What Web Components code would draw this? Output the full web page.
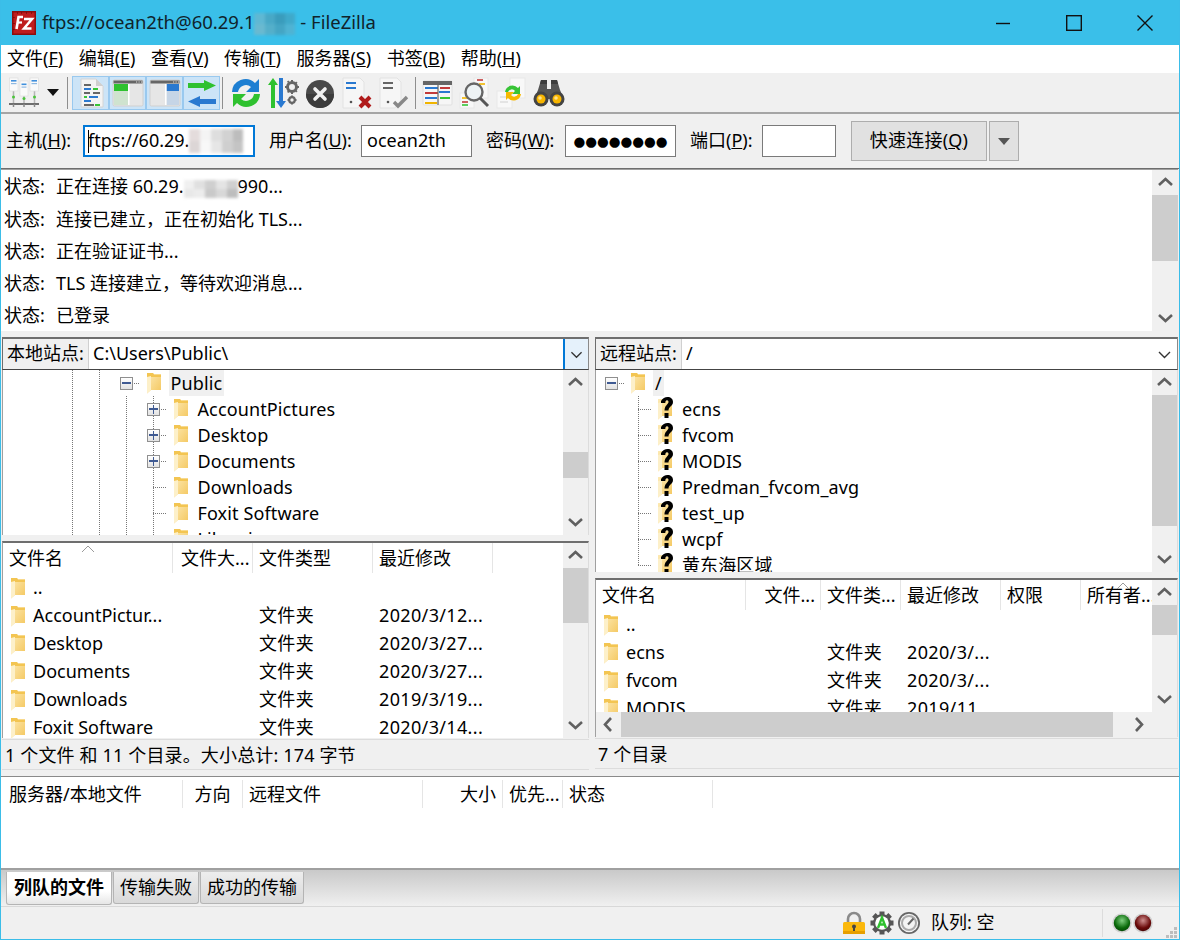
<!DOCTYPE html>
<html lang="zh"><head><meta charset="utf-8"><title>FileZilla</title>
<style>
html,body{margin:0;padding:0;background:#f0f0f0}
body{font:18px/1.2 "Noto Sans","Noto Sans CJK SC",sans-serif;color:#000}
</style></head><body>
<fz-window>
  <fz-titlebar>ftps://ocean2th@60.29.1<fz-blur w="41" h="22" palette="#5fb8d3,#6ab9d0,#48a8c6,#54afca,#3a9cbc,#44a5c4,#3fa9ca,#4fb3d3"></fz-blur> - FileZilla</fz-titlebar>
  <fz-menubar>
    <fz-menu key="F">文件</fz-menu><fz-menu key="E">编辑</fz-menu><fz-menu key="V">查看</fz-menu><fz-menu key="T">传输</fz-menu><fz-menu key="S">服务器</fz-menu><fz-menu key="B">书签</fz-menu><fz-menu key="H">帮助</fz-menu>
  </fz-menubar>
  <fz-toolbar></fz-toolbar>
  <fz-quickconnect></fz-quickconnect>
  <fz-log>
    <fz-logline>正在连接 60.29.<fz-blur w="54" h="18" palette="#f0f0f0,#e8e8e8,#e0e0e0,#ececec,#cfcfcf,#c9c9c9,#e4e4e4,#d8d8d8,#d0d0d0,#bdbdbd"></fz-blur>990...</fz-logline>
    <fz-logline>连接已建立，正在初始化 TLS...</fz-logline>
    <fz-logline>正在验证证书...</fz-logline>
    <fz-logline>TLS 连接建立，等待欢迎消息...</fz-logline>
    <fz-logline>已登录</fz-logline>
  </fz-log>
  <fz-panes>
    <fz-pane>
      <fz-sitebar label="本地站点:" path="C:\Users\Public\" hot></fz-sitebar>
      <fz-tree h="165" sb-before="57" sb-size="26" pad="56">
        <fz-node cells="v v minus" selected>Public</fz-node>
        <fz-node cells="v v v plus">AccountPictures</fz-node>
        <fz-node cells="v v v plus">Desktop</fz-node>
        <fz-node cells="v v v plus">Documents</fz-node>
        <fz-node cells="v v v t">Downloads</fz-node>
        <fz-node cells="v v v t">Foxit Software</fz-node>
        <fz-node cells="v v v t">Libraries</fz-node>
      </fz-tree>
      <fz-sash></fz-sash>
      <fz-listview h="197" cols="170px 80px 120px 120px 1fr" sb-size="55" sort="78" style="--pl:8px;--gap:8px">
        <fz-head slot="head"><span>文件名</span><span style="padding-left:8px">文件大...</span><span>文件类型</span><span>最近修改</span></fz-head>
        <fz-row name=".."></fz-row>
        <fz-row name="AccountPictur..."><span></span><span>文件夹</span><span>2020/3/12...</span></fz-row>
        <fz-row name="Desktop"><span></span><span>文件夹</span><span>2020/3/27...</span></fz-row>
        <fz-row name="Documents"><span></span><span>文件夹</span><span>2020/3/27...</span></fz-row>
        <fz-row name="Downloads"><span></span><span>文件夹</span><span>2019/3/19...</span></fz-row>
        <fz-row name="Foxit Software"><span></span><span>文件夹</span><span>2020/3/14...</span></fz-row>
      </fz-listview>
      <fz-statusline>1 个文件 和 11 个目录。大小总计: 174 字节</fz-statusline>
    </fz-pane>
    <fz-pane>
      <fz-sitebar label="远程站点:" path="/"></fz-sitebar>
      <fz-tree h="202" sb-before="0" sb-size="131" pad="1.5">
        <fz-node cells="minus" selected>/</fz-node>
        <fz-node cells="e t" icon="q">ecns</fz-node>
        <fz-node cells="e t" icon="q">fvcom</fz-node>
        <fz-node cells="e t" icon="q">MODIS</fz-node>
        <fz-node cells="e t" icon="q">Predman_fvcom_avg</fz-node>
        <fz-node cells="e t" icon="q">test_up</fz-node>
        <fz-node cells="e t" icon="q">wcpf</fz-node>
        <fz-node cells="e l" icon="q">黄东海区域</fz-node>
      </fz-tree>
      <fz-sash></fz-sash>
      <fz-listview h="159" cols="150px 75px 80px 100px 80px 1fr" sb-size="30" sort="520" hbar style="--pl:8px;--gap:8px">
        <fz-head slot="head"><span>文件名</span><span style="text-align:right;padding-right:5px">文件...</span><span>文件类...</span><span>最近修改</span><span>权限</span><span>所有者...</span></fz-head>
        <fz-row name=".."></fz-row>
        <fz-row name="ecns"><span></span><span>文件夹</span><span>2020/3/...</span></fz-row>
        <fz-row name="fvcom"><span></span><span>文件夹</span><span>2020/3/...</span></fz-row>
        <fz-row name="MODIS"><span></span><span>文件夹</span><span>2019/11...</span></fz-row>
      </fz-listview>
      <fz-statusline>7 个目录</fz-statusline>
    </fz-pane>
  </fz-panes>
  <fz-queue>
    <span style="width:182px">服务器/本地文件</span><span style="width:60px;text-align:center;padding-left:0">方向</span><span style="width:180px;padding-left:6px">远程文件</span><span style="width:80px;text-align:right;box-sizing:border-box;padding-right:6px">大小</span><span style="width:60px;padding-left:6px">优先...</span><span style="width:150px;padding-left:6px">状态</span>
  </fz-queue>
  <fz-tabs>
    <fz-tab active>列队的文件</fz-tab><fz-tab>传输失败</fz-tab><fz-tab>成功的传输</fz-tab>
  </fz-tabs>
  <fz-statusbar></fz-statusbar>
</fz-window>
<script>
const ICONS={
logo:`<svg width="24" height="24" viewBox="0 0 24 24"><rect width="24" height="24" fill="#8c0d0d"/><rect x="1.5" y="1.5" width="21" height="21" fill="#bf1c1c"/><path d="M5 2h1M9 2h1M14 2h1M19 2h1M2 6v1M2 12v1M2 18v1" stroke="#5a0505"/><polyline points="11,6 6.5,6 4.500,18" fill="none" stroke="#fff" stroke-width="2.6"/><line x1="5.500" y1="11.500" x2="10" y2="11.500" stroke="#fff" stroke-width="2.200"/><polyline points="12,8 20,8 12,17.500 19.500,17.500" fill="none" stroke="#fff" stroke-width="2.500"/></svg>`,
site:`<svg width="32" height="32" viewBox="0 0 32 32"><path d="M5.500 14v13M16 19v8M26.500 14v13" stroke="#b5b5b5" stroke-width="1.500"/><g fill="#fafafa" stroke="#dedede" stroke-width=".7"><rect x="1.500" y="1" width="8.500" height="13"/><rect x="12" y="4" width="8" height="15"/><rect x="22" y="1" width="8.500" height="13"/></g><g fill="#3f8fdc"><rect x="3" y="3" width="5.500" height="1.600"/><rect x="13.500" y="6.500" width="5" height="1.600"/><rect x="23.500" y="3" width="5.500" height="1.600"/></g><g fill="#8db8e2"><rect x="3" y="6" width="5.500" height="1.200"/><rect x="13.500" y="9.500" width="5" height="1.200"/><rect x="23.500" y="6" width="5.500" height="1.200"/></g><g fill="#4cc43c"><circle cx="5.500" cy="20" r="1.500"/><circle cx="16" cy="21.500" r="1.500"/><circle cx="26.500" cy="20" r="1.500"/></g><path d="M1 27h30" stroke="#6e6e6e" stroke-width="2"/><path d="M5.500 27v3M16 27v3M26.500 27v3" stroke="#888" stroke-width="1.500"/></svg>`,
log:`<svg width="32" height="32" viewBox="0 0 32 32"><path d="M6 2h15l7 7v21H6z" fill="#f3f3f3" stroke="#d4d4d4"/><path d="M21 2v7h7z" fill="#cfcfcf"/><g stroke-width="1.800" fill="none"><path d="M9 8h7M9 16h6M18 16h7M9 28h10" stroke="#666"/><path d="M9 12h7M14 20h9M9 24h7" stroke="#2a79d0"/><path d="M18 12h5M9 20h3M20 28h5" stroke="#38c437"/></g></svg>`,
ltree:`<svg width="32" height="32" viewBox="0 0 32 32"><rect x="1" y="3" width="30" height="26" rx="1.500" fill="#e6e6e6" stroke="#d0d0d0"/><rect x="1.500" y="3.500" width="29" height="3" fill="#666"/><path d="M24 5h1.200M26.500 5h1.200M29 5h1" stroke="#ddd"/><rect x="2" y="7" width="14" height="7" fill="#2fc22f"/><rect x="2" y="14" width="14" height="14" fill="#cfe3cf"/><rect x="16" y="7" width="1.500" height="21" fill="#fff"/></svg>`,
rtree:`<svg width="32" height="32" viewBox="0 0 32 32"><rect x="1" y="3" width="30" height="26" rx="1.500" fill="#e6e6e6" stroke="#d0d0d0"/><rect x="1.500" y="3.500" width="29" height="3" fill="#666"/><path d="M24 5h1.200M26.500 5h1.200M29 5h1" stroke="#ddd"/><rect x="17.500" y="7" width="12.500" height="7" fill="#2a79d0"/><rect x="17.500" y="14" width="12.500" height="14" fill="#c6d5e6"/><rect x="16" y="7" width="1.500" height="21" fill="#fff"/></svg>`,
swap:`<svg width="32" height="32" viewBox="0 0 32 32"><path d="M2 6h16V3l12 5.500-12 5.500v-3H2z" fill="#2fc12f"/><path d="M30 22H14v-3L2 24.500 14 30v-3h16z" fill="#2a79d0"/></svg>`,
refresh:`<svg width="32" height="32" viewBox="0 0 32 32"><path d="M2 15A13.500 13.500 0 0 1 25 6l4-4v13H16l5-5A8 8 0 0 0 8 15z" fill="#1e7fd2"/><path d="M30 17A13.500 13.500 0 0 1 7 26l-4 4V17h13l-5 5A8 8 0 0 0 24 17z" fill="#2fc12f"/></svg>`,
process:`<svg width="32" height="32" viewBox="0 0 32 32"><path d="M6 1l5 7H8v23H4V8H1z" fill="#2fc12f"/><path d="M14 31l-5-7h3V1h4v23h3z" fill="#2a79d0"/><g fill="#666"><circle cx="25" cy="10" r="4.500" fill="none" stroke="#666" stroke-width="3"/><path d="M24 3h2v2h-2zM24 15h2v2h-2zM18 9h2v2h-2zM30 9h2v2h-2zM20 4.500l1.500-1 1 1.500-1.500 1zM28 14l1.500-1 1 1.500-1.500 1zM20 15l1-1.500 1.500 1-1 1.500zM28 6l1-1.500 1.500 1-1 1.500z"/><circle cx="25" cy="23" r="2.800" fill="none" stroke="#666" stroke-width="2.200"/><path d="M24 18.500h2v1.500h-2zM24 26h2v1.500h-2zM20.500 22h1.500v2h-1.500zM28 22h1.500v2H28z"/></g></svg>`,
cancel:`<svg width="32" height="32" viewBox="0 0 32 32"><circle cx="16" cy="17" r="14" fill="#4a4a4a"/><path d="M2 17a14 14 0 0 0 28 0z" fill="#3c3c3c"/><path d="M11 12l10 10M21 12L11 22" stroke="#f2f2f2" stroke-width="3.600" stroke-linecap="round"/></svg>`,
disc:`<svg width="32" height="32" viewBox="0 0 32 32"><path d="M2 1h17l4 4v18l-6 8H2z" fill="#f6f6f6" stroke="#e2e2e2"/><path d="M5 6h10M5 11h10" stroke="#2a79d0" stroke-width="2"/><circle cx="10" cy="25" r="1.300" fill="#555"/><path d="M19 20l10 10M29 20L19 30" stroke="#b01a1a" stroke-width="4"/></svg>`,
reconn:`<svg width="32" height="32" viewBox="0 0 32 32"><path d="M2 1h17l4 4v18l-6 8H2z" fill="#f6f6f6" stroke="#e2e2e2"/><path d="M5 6h10M5 11h10" stroke="#666" stroke-width="2"/><circle cx="10" cy="25" r="1.300" fill="#555"/><path d="M16 25l4 4 9-9" stroke="#888" stroke-width="3.400" fill="none"/></svg>`,
filter:`<svg width="32" height="32" viewBox="0 0 32 32"><rect x="1" y="4" width="29" height="24" rx="1" fill="#f6f6f6" stroke="#e0e0e0"/><rect x="1" y="4" width="29" height="4" fill="#666"/><path d="M3 11h13M3 21h12M17 15h11" stroke="#2a79d0" stroke-width="2"/><path d="M3 16h13M18 11h10" stroke="#c23a3a" stroke-width="2"/><path d="M18 21h10" stroke="#38c437" stroke-width="2"/><path d="M3 26h12" stroke="#f0b400" stroke-width="2"/><path d="M16 8v20" stroke="#666" stroke-width="1.200"/></svg>`,
search:`<svg width="32" height="32" viewBox="0 0 32 32"><rect x="15" y="1" width="14" height="20" fill="#f8f8f8" stroke="#e8e8e8"/><path d="M18 3h6" stroke="#c23a3a" stroke-width="1.600"/><path d="M20 7h6" stroke="#f0b400" stroke-width="1.600"/><rect x="1" y="16" width="14" height="15" fill="#f8f8f8" stroke="#e8e8e8"/><path d="M3 21h6" stroke="#f0b400" stroke-width="1.600"/><path d="M3 25h6" stroke="#c23a3a" stroke-width="1.600"/><path d="M3 28h6" stroke="#38c437" stroke-width="1.600"/><circle cx="15" cy="15" r="8.500" fill="#eef3f5" stroke="#666" stroke-width="2.400"/><path d="M21 21l8 8" stroke="#555" stroke-width="3"/></svg>`,
sync:`<svg width="32" height="32" viewBox="0 0 32 32"><rect x="14" y="1" width="15" height="20" fill="#f8f8f8" stroke="#e8e8e8"/><rect x="1" y="14" width="15" height="17" fill="#f8f8f8" stroke="#e8e8e8"/><path d="M4 20h6M4 25h8" stroke="#ddd" stroke-width="1.500"/><path d="M9 15a7.500 7.500 0 0 1 13-4l2-2v8h-8l3-3a4 4 0 0 0-7 1z" fill="#38c437"/><path d="M25 17a7.500 7.500 0 0 1-13 4l-2 2v-8h8l-3 3a4 4 0 0 0 7-1z" fill="#f6b800"/></svg>`,
binoc:`<svg width="32" height="32" viewBox="0 0 32 32"><path d="M8 3h6v9h4V3h6l3 10 4 9H1l4-9z" fill="#555"/><path d="M8 3h6v4H7zM18 3h6l1 4h-7z" fill="#3d3d3d"/><circle cx="8" cy="22" r="7.500" fill="#444"/><circle cx="24" cy="22" r="7.500" fill="#444"/><circle cx="8" cy="22" r="4.500" fill="#f7b500"/><circle cx="24" cy="22" r="4.500" fill="#f7b500"/><circle cx="7" cy="21" r="1.800" fill="#ffe28a"/><circle cx="23" cy="21" r="1.800" fill="#ffe28a"/></svg>`,
folder:`<svg width="14" height="21" viewBox="0 0 14 21"><defs><linearGradient id="fg" x1="0" y1="0" x2="1" y2="1"><stop offset="0" stop-color="#fdeab4"/><stop offset="1" stop-color="#f4c75e"/></linearGradient></defs><path d="M0 0h6l1 1.500h7V17H4l-4 3.500z" fill="url(#fg)"/><path d="M0 0h6l1 1.500h7V4H4L0 5z" fill="#f3c552"/><path d="M0 4l4-1v14l-4 3.500z" fill="#fdf0c9"/></svg>`,
lock:`<svg width="24" height="24" viewBox="0 0 24 24"><path d="M6 12V8a6 6 0 0 1 12 0v4" fill="none" stroke="#8a8a8a" stroke-width="2.600"/><rect x="1" y="11" width="22" height="12" rx="1.500" fill="#fbb80c"/><rect x="1" y="20" width="22" height="3" fill="#e79f00"/><circle cx="12" cy="15.500" r="2" fill="#444"/><rect x="11" y="16" width="2" height="4" fill="#444"/></svg>`,
gear:`<svg width="24" height="24" viewBox="0 0 24 24"><g fill="#555"><circle cx="12" cy="12" r="9"/><rect x="9.500" y="0.500" width="5" height="23"/><rect x="0.500" y="9.500" width="23" height="5"/><rect x="9.500" y="0.500" width="5" height="23" transform="rotate(45 12 12)"/><rect x="9.500" y="0.500" width="5" height="23" transform="rotate(-45 12 12)"/></g><circle cx="12" cy="12" r="6.800" fill="#fff"/><path d="M8 17L12 6.500 16 17M9.500 13.500h5" fill="none" stroke="#2fc12f" stroke-width="2.400"/></svg>`,
speed:`<svg width="24" height="24" viewBox="0 0 24 24"><circle cx="12" cy="12" r="11" fill="#666"/><circle cx="12" cy="12" r="9.200" fill="#f4f4f4"/><circle cx="12" cy="12" r="7" fill="none" stroke="#aaa" stroke-width="2"/><path d="M11 13.500l5.500-6" stroke="#666" stroke-width="2"/></svg>`,
green:`<svg width="20" height="20" viewBox="0 0 18 18"><defs><radialGradient id="g1" cx=".5" cy=".35" r=".65"><stop offset="0" stop-color="#7fcf7f"/><stop offset=".7" stop-color="#0a6a0a"/><stop offset="1" stop-color="#074a07"/></radialGradient></defs><circle cx="9" cy="9" r="8.800" fill="#d0d0d0"/><circle cx="9" cy="9" r="7.400" fill="url(#g1)"/></svg>`,
red:`<svg width="20" height="20" viewBox="0 0 18 18"><defs><radialGradient id="r1" cx=".5" cy=".35" r=".65"><stop offset="0" stop-color="#cf8f8f"/><stop offset=".7" stop-color="#6a0a0a"/><stop offset="1" stop-color="#4a0707"/></radialGradient></defs><circle cx="9" cy="9" r="8.800" fill="#d0d0d0"/><circle cx="9" cy="9" r="7.400" fill="url(#r1)"/></svg>`
};
ICONS.qfolder=`<svg width="15" height="26" viewBox="0 0 15 26"><defs><linearGradient id="qg" x1="0" y1="0" x2="1" y2="1"><stop offset="0" stop-color="#fdeab4"/><stop offset="1" stop-color="#f4c75e"/></linearGradient></defs><g transform="translate(0,3)"><path d="M0 0h6l1 1.500h7V17H4l-4 3.500z" fill="url(#qg)"/><path d="M0 4l4-1v14l-4 3.500z" fill="#fdf0c9"/></g><path d="M3 7V5C4.500 2.500 7 1 9.500 1c3.300 0 5.500 2 5.500 5 0 4.200-4.500 4.500-4.500 8.500h-4C6.500 9 10.500 8.500 10.500 6c0-1-.6-1.700-1.500-1.700C8 4.300 7.300 5.200 7.300 7zM6.500 17h4v5h-4z" fill="#000"/></svg>`;
function def(name,css,html,init){
  customElements.define(name,class extends HTMLElement{
    constructor(){super();this.attachShadow({mode:'open'})}
    connectedCallback(){
      const a=n=>this.getAttribute(n);
      this.shadowRoot.innerHTML=`<style>${typeof css==='function'?css(a,this):css}</style>`+(typeof html==='function'?html(a,this):html);
      init&&init(this,a);
    }
  });
}
const chev={up:'M6 15l6.500-6 6.500 6',down:'M6 9l6.500 6 6.500-6',left:'M15 6l-6 6.500 6 6.500',right:'M9 6l6 6.500-6 6.500',mini:'M7 10l5.500 5.500L18 10'};
const arrow=(d,c='#606060',w=2.6)=>`<svg width="25" height="25" viewBox="0 0 25 25"><path d="${chev[d]}" fill="none" stroke="${c}" stroke-width="${w}"/></svg>`;

def('fz-icon',':host{display:inline-flex;align-items:center;justify-content:center;flex:none}',(a)=>ICONS[a('name')]);

def('fz-blur',':host{display:inline-grid;grid-auto-flow:column;vertical-align:middle}b{display:block}',(a)=>{
  const w=+a('w'),h=+a('h'),p=a('palette').split(','),n=Math.ceil(p.length/2);
  return `<style>:host{width:${w}px;height:${h}px;grid-template-columns:repeat(${n},1fr);grid-template-rows:1fr 1fr;filter:blur(1.500px)}</style>`+p.map(c=>`<b style="background:${c}"></b>`).join('')
});

def('fz-window',':host{display:flex;flex-direction:column;width:1180px;height:940px;box-sizing:border-box;border:1px solid #3bbde8;border-top:0;background:#f0f0f0;overflow:hidden}','<slot></slot>');

def('fz-titlebar',`:host{display:flex;align-items:center;height:45px;flex:none;background:#3abfe9;margin:0 -1px;padding:0 0 0 12px;color:#10232b;font-size:18.500px}
.t{flex:1;margin-left:6px;white-space:pre;line-height:24px}
.c{width:71px;height:45px;display:flex;align-items:center;justify-content:center}
svg{display:block}`,
`<fz-icon name="logo"></fz-icon><div class="t"><slot></slot></div>
<div class="c"><svg width="16" height="16"><path d="M1 8.500h14" stroke="#111" stroke-width="1.400"/></svg></div>
<div class="c"><svg width="16" height="16"><rect x=".7" y=".7" width="14.600" height="14.600" fill="none" stroke="#111" stroke-width="1.400"/></svg></div>
<div class="c"><svg width="16" height="16"><path d="M.5.500l15 15M15.500.500l-15 15" stroke="#111" stroke-width="1.400"/></svg></div>`);

def('fz-menubar',':host{display:flex;height:28px;flex:none;background:#fff;align-items:center;padding-left:6px;gap:15.500px}','<slot></slot>');
def('fz-menu',':host{display:block;white-space:nowrap}',(a)=>`<slot></slot>(<u>${a('key')}</u>)`);

def('fz-toolbar',`:host{display:flex;height:39px;flex:none;align-items:center;padding-left:4px;border-bottom:2px solid #a5a5a5;box-sizing:content-box}
.b{width:37px;height:34px;display:flex;align-items:center;justify-content:center;flex:none;box-sizing:border-box}
.on{background:#cce4f7;border:1px solid #99c9ef}
.s{width:1px;height:32px;background:#8e8e8e;flex:none}
.d{width:0;height:0;border:6px solid transparent;border-top:7px solid #111;border-bottom:0;margin:0 8px 0 5px;flex:none}`,
()=>{const b=(n,on)=>`<div class="b${on?' on':''}"><fz-icon name="${n}"></fz-icon></div>`;
return `${b('site')}<div class="d"></div><div class="s" style="margin-right:4px"></div>${b('log',1)}${b('ltree',1)}${b('rtree',1)}${b('swap',1)}<div class="s" style="margin:0 4px 0 2px"></div>${b('refresh')}${b('process')}${b('cancel')}${b('disc')}${b('reconn')}<div class="s" style="margin:0 3px"></div>${b('filter')}${b('search')}${b('sync')}${b('binoc')}`});

def('fz-quickconnect',`:host{display:flex;height:54px;flex:none;align-items:center;padding-left:5px;border-bottom:1px solid #6e6e6e;box-sizing:content-box;white-space:nowrap}
.i{height:32px;box-sizing:border-box;border:1px solid #7a7a7a;background:#fff;display:flex;align-items:center;padding:0 5px;flex:none;overflow:hidden}
.host{border:2px solid #0078d7;padding:0 3px;width:172px;margin:0 14px 0 10px}
.caret{width:1px;height:23px;background:#000;margin-right:-1px;flex:none}
.btn{width:136px;height:40px;box-sizing:border-box;background:#e1e1e1;border:1px solid #adadad;display:flex;align-items:center;justify-content:center;margin-left:15px;flex:none;letter-spacing:.2px}
.dd{width:30px;height:40px;box-sizing:border-box;background:#e1e1e1;border:1px solid #adadad;display:flex;align-items:center;justify-content:center;margin-left:2px;flex:none}
.dd i{border:6px solid transparent;border-top:7px solid #555;border-bottom:0}
.l{flex:none}
.l1{width:67px}.l2{width:86px}.l3{width:73px}.l4{width:66px}`,
`<span class="l l1">主机(<u>H</u>):</span><div class="i host"><span class="caret"></span>ftps://60.29.<fz-blur w="54" h="24" palette="#e4dcdc,#dcd6d6,#f4f4f4,#f8f8f8,#dedede,#e6e6e6,#d2d2d2,#cfcfcf,#bdbdbd,#c4c4c4"></fz-blur></div>
<span class="l l2">用户名(<u>U</u>):</span><div class="i" style="width:111px;margin:0 14px 0 6px">ocean2th</div>
<span class="l l3">密码(<u>W</u>):</span><div class="i" style="width:111px;margin:0 14px 0 6px;font:13.500px 'DejaVu Sans',sans-serif;padding:0 7px;justify-content:center">●●●●●●●●</div>
<span class="l l4">端口(<u>P</u>):</span><div class="i" style="width:74px;margin-left:6px"></div>
<div class="btn">快速连接(<u>Q</u>)</div><div class="dd"><i></i></div>`);

def('fz-scrollbar',`:host{display:flex;flex:none;background:#f0f0f0}
:host([dir="v"]){flex-direction:column;width:25px}
:host([dir="h"]){flex-direction:row;height:25px}
.a{flex:none;display:flex;align-items:center;justify-content:center}
:host([dir="v"]) .a{height:25px}:host([dir="h"]) .a{width:25px}
.tr{flex:1;display:flex;flex-direction:inherit;min-width:0;min-height:0}
.th{background:#cdcdcd;flex:none}
svg{display:block}`,
(a)=>{const v=a('dir')==='v',s=a('size'),b=a('before')||0;
return `<div class="a">${arrow(v?'up':'left')}</div><div class="tr"><div style="flex:0 0 ${b}px"></div><div class="th" style="flex-basis:${s}px"></div></div><div class="a">${arrow(v?'down':'right')}</div>`});

def('fz-log',`:host{display:flex;height:162px;flex:none;background:#fff;margin-top:0;border-top:1px solid #a0a0a0;margin-right:1px;box-sizing:border-box}
.c{flex:1;padding-left:3px;padding-top:1px;overflow:hidden}`,
`<div class="c"><slot></slot></div><fz-scrollbar dir="v" size="66" style="width:26px"></fz-scrollbar>`);
def('fz-logline',`:host{display:flex;height:32.250px;align-items:center;white-space:pre}
.k{width:52px;flex:none}`,`<span class="k">状态:</span><span><slot></slot></span>`);

def('fz-panes',':host{display:grid;grid-template-columns:587px 583px;column-gap:6px;padding:6px 1px 0 1px;flex:none;height:439px;box-sizing:border-box}','<slot></slot>');
def('fz-pane',':host{display:flex;flex-direction:column;min-width:0}','<slot></slot>');
def('fz-sash',':host{display:block;height:6px;flex:none}','');

def('fz-sitebar',`:host{display:flex;height:33px;flex:none;border-top:2px solid #6e6e6e;border-bottom:1px solid #444;box-sizing:border-box;background:#fff;align-items:stretch;border-left:1px solid #6e6e6e;border-right:1px solid #8a8a8a}
.l{width:86px;flex:none;background:#f0f0f0;display:flex;align-items:center;justify-content:center;box-sizing:border-box;border-right:1px solid #d0d0d0;font-size:18px}
.p{flex:1;display:flex;align-items:center;padding-left:4px;white-space:pre}
.d{width:25px;flex:none;display:flex;align-items:center;justify-content:center;box-sizing:border-box}
:host([hot]) .d{background:#e5f1fb;border-left:2px solid #0078d7}`,
(a,t)=>`<div class="l">${a('label')}</div><div class="p">${a('path')}</div><div class="d">${arrow('mini','#333',1.4)}</div>`);

def('fz-tree',(a)=>`:host{display:flex;height:${a('h')}px;flex:none;background:#fff;border-left:1px solid #a0a0a0;border-right:1px solid #dcdcdc;box-sizing:border-box}
.c{flex:1;overflow:hidden;padding-left:${a('pad')}px;padding-top:0;min-width:0}`,
(a)=>`<div class="c"><slot></slot></div><fz-scrollbar dir="v" before="${a('sb-before')}" size="${a('sb-size')}"></fz-scrollbar>`);

const dot='#777';
def('fz-node',`:host{display:flex;height:26px;align-items:center;white-space:nowrap}
.x{width:27px;height:26px;flex:none;position:relative;display:flex;align-items:center;justify-content:center}
.f{width:27px;flex:none;display:flex;justify-content:center;align-items:center;height:26px;overflow:visible}
.lb{margin-left:1.500px;padding:0 2px;line-height:26px;height:26px;letter-spacing:.12px}
:host([selected]) .lb{background:#f0f0f0}
svg{display:block}
.h{position:absolute;left:13px;top:13px;width:14px;height:1px;background:repeating-linear-gradient(to right,${dot} 0 1px,transparent 1px 2px)}
.v{position:absolute;left:13px;top:0;bottom:0;width:1px;background:repeating-linear-gradient(to bottom,${dot} 0 1px,transparent 1px 2px)}
.v2{position:absolute;left:13px;top:0;height:14px;width:1px;background:repeating-linear-gradient(to bottom,${dot} 0 1px,transparent 1px 2px)}
.bx{position:relative;width:13px;height:13px;box-sizing:border-box;border:1px solid #8f8f8f;background:linear-gradient(#fff,#e2e2e2)}
.bx i{position:absolute;left:1px;right:1px;top:4.500px;height:1.500px;background:#3f5a92}
.bx b{position:absolute;top:1px;bottom:1px;left:4.500px;width:1.500px;background:#3f5a92}`,
(a)=>{
 const cells=(a('cells')||'').split(' ').map(c=>{
  if(c==='e')return '<div class="x"></div>';
  if(c==='v')return '<div class="x"><span class="v"></span></div>';
  if(c==='t')return '<div class="x"><span class="v"></span><span class="h"></span></div>';
  if(c==='l')return '<div class="x"><span class="v2"></span><span class="h"></span></div>';
  if(c==='plus')return '<div class="x"><span class="v"></span><span class="h"></span><span class="bx"><i></i><b></b></span></div>';
  if(c==='minus')return '<div class="x"><span class="h"></span><span class="bx"><i></i></span></div>';
  return '';
 }).join('');
 const ic=a('icon')==='q'?'qfolder':'folder';
 return `${cells}<div class="f"><fz-icon name="${ic}"></fz-icon></div><span class="lb"><slot></slot></span>`;
});

def('fz-listview',(a)=>`:host{display:block;position:relative;height:${a('h')}px;flex:none;background:#fff;box-sizing:border-box;border-top:2px solid #6e6e6e;border-left:1px solid #a0a0a0;border-right:1px solid #dcdcdc;--cols:${a('cols')};overflow:hidden}
.top{display:flex;height:${+a('h')-2-(a('hbar')!==null?25:0)}px}
.m{flex:1;min-width:0;overflow:hidden}
.bottom{display:flex;height:25px}
.sort{position:absolute;top:2px;left:${a('sort')}px}`,
(a)=>`<div class="top"><div class="m"><slot name="head"></slot><slot></slot></div><fz-scrollbar dir="v" size="${a('sb-size')}"></fz-scrollbar></div>
${a('hbar')!==null?`<div class="bottom"><fz-scrollbar dir="h" size="492" style="flex:1"></fz-scrollbar><div style="width:25px;background:#f0f0f0"></div></div>`:''}
<svg class="sort" width="14" height="8"><path d="M1 7l6-6 6 6" fill="none" stroke="#9a9a9a"/></svg>`);
def('fz-head',`:host{display:grid;grid-template-columns:var(--cols);height:31px;align-items:start;background:#fff;white-space:nowrap}
::slotted(span){display:block;box-sizing:border-box;height:30px;line-height:30px;padding-left:6px;border-right:1px solid #e5e5e5}`,'<slot></slot>');
def('fz-row',`:host{display:grid;grid-template-columns:var(--cols);height:28px;align-items:center;white-space:nowrap}
.n{display:flex;align-items:center;padding-left:var(--pl);gap:var(--gap)}
::slotted(span){display:block;padding-left:6px;letter-spacing:.35px}
svg{display:block}`,
(a)=>`<div class="n"><fz-icon name="folder"></fz-icon><span>${a('name')}</span></div><slot></slot>`);

def('fz-statusline',':host{display:flex;align-items:center;height:31px;flex:none;margin-top:1px;padding:3px 0 0 3px;border-top:1px solid #dcdcdc;border-bottom:1px solid #dcdcdc;box-sizing:border-box;white-space:pre;letter-spacing:.15px}','<slot></slot>');

def('fz-queue',`:host{display:block;height:94px;flex:none;margin-top:6px;background:#fff;border-top:1px solid #8a8a8a;border-bottom:2px solid #a0a0a0;box-sizing:border-box;padding-top:3px}
.h{display:flex;height:28px;white-space:nowrap;align-items:center}
::slotted(span){display:block;height:28px;line-height:28px;box-sizing:border-box;padding-left:8px;border-right:1px solid #e5e5e5}`,
'<div class="h"><slot></slot></div>');

def('fz-tabs',`:host{display:flex;height:37px;flex:none;padding-left:5px;background:linear-gradient(#c9c9c9,#f0f0f0);align-items:flex-start;padding-top:2px;box-sizing:border-box;border-bottom:1px solid #d8d8d8;gap:1px}`,'<slot></slot>');
def('fz-tab',`:host{display:flex;align-items:center;justify-content:center;height:32px;box-sizing:border-box;padding:0 6px;background:linear-gradient(#ededed,#d9d9d9);border:1px solid #b4b4b4;border-top:0;border-radius:0 0 3px 3px;white-space:nowrap}
:host([active]){background:linear-gradient(#ffffff 60%,#e6e6e6);font-weight:700;height:33px;padding:0 7px}`,'<slot></slot>');

def('fz-statusbar',`:host{display:flex;flex:1;align-items:center;justify-content:flex-end;white-space:pre}
.q{margin:0 0 0 10px;width:171px}
.s{width:1px;align-self:stretch;background:#dcdcdc;margin:2px 0}
.l{width:76px;display:flex;gap:1px;padding-left:9px;box-sizing:border-box;align-items:center;align-self:stretch;position:relative}
.g{position:absolute;right:1px;bottom:1px}`,
`<fz-icon name="lock" style="margin-right:4px"></fz-icon><fz-icon name="gear" style="margin-right:3px"></fz-icon><fz-icon name="speed"></fz-icon><span class="q">队列: 空</span><span class="s"></span><div class="l"><fz-icon name="green"></fz-icon><fz-icon name="red"></fz-icon><svg class="g" width="12" height="12"><path d="M8 1h3v3H8zM4 5h3v3H4zM8 5h3v3H8zM0 9h3v3H0zM4 9h3v3H4zM8 9h3v3H8z" fill="#bdbdbd"/></svg></div>`);
</script>
</body></html>
